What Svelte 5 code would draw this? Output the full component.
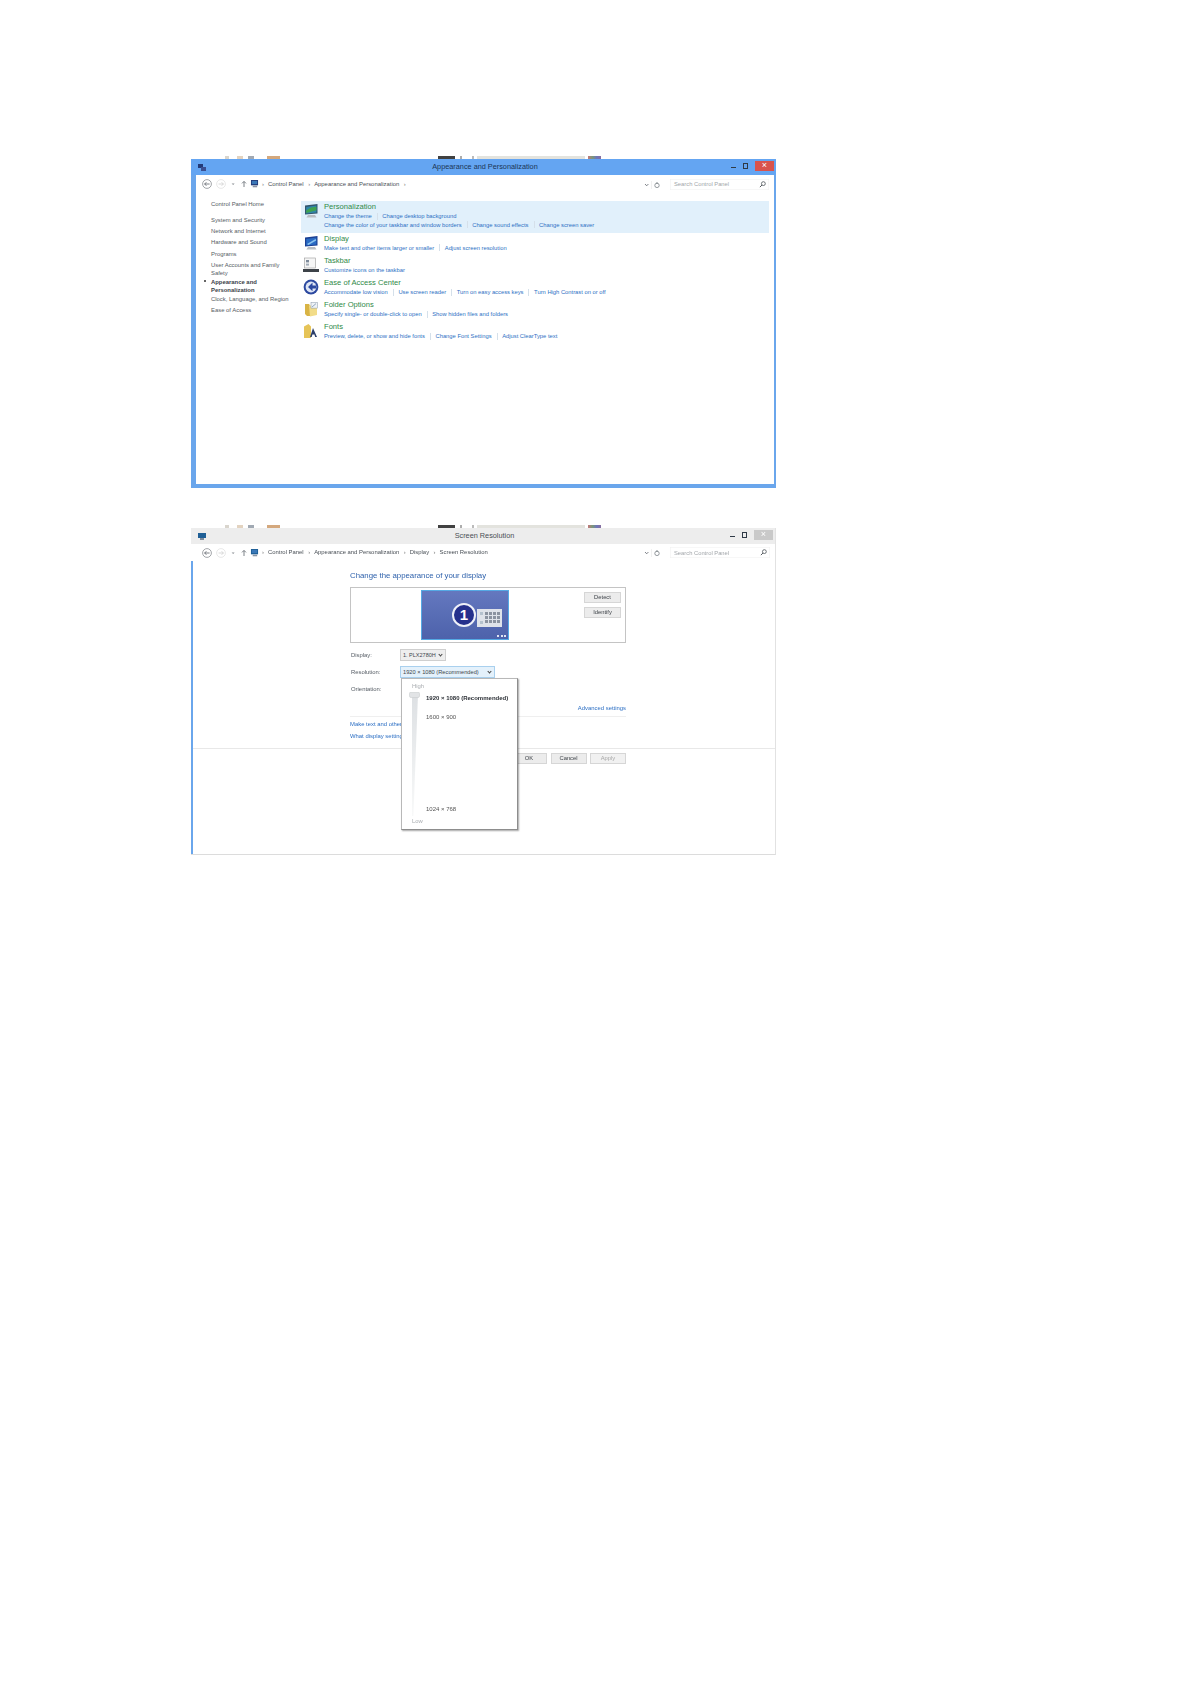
<script>
	const sidebar = [
		{ text: 'System and Security' },
		{ text: 'Network and Internet' },
		{ text: 'Hardware and Sound' },
		{ text: 'Programs' },
		{ text: 'User Accounts and Family Safety', two: true },
		{ text: 'Appearance and Personalization', two: true, current: true },
		{ text: 'Clock, Language, and Region' },
		{ text: 'Ease of Access' }
	];

	const tasks = [
		{
			icon: 'monitor',
			title: 'Personalization',
			active: true,
			rows: [
				['Change the theme', 'Change desktop background'],
				['Change the color of your taskbar and window borders', 'Change sound effects', 'Change screen saver']
			]
		},
		{ icon: 'display', title: 'Display', rows: [['Make text and other items larger or smaller', 'Adjust screen resolution']] },
		{ icon: 'taskbar', title: 'Taskbar', rows: [['Customize icons on the taskbar']] },
		{
			icon: 'ease',
			title: 'Ease of Access Center',
			rows: [['Accommodate low vision', 'Use screen reader', 'Turn on easy access keys', 'Turn High Contrast on or off']]
		},
		{ icon: 'folder', title: 'Folder Options', rows: [['Specify single- or double-click to open', 'Show hidden files and folders']] },
		{ icon: 'fonts', title: 'Fonts', rows: [['Preview, delete, or show and hide fonts', 'Change Font Settings', 'Adjust ClearType text']] }
	];

	// scraps of the desktop that show above each window
	const scraps = [
		{ w: 4, gap: 34, c: '#cfcac0' },
		{ w: 6, gap: 8, c: '#dcc8b0' },
		{ w: 6, gap: 5, c: '#8a94a0' },
		{ w: 13, gap: 13, c: '#c9925c' },
		{ w: 17, gap: 158, c: '#111111' },
		{ w: 2, gap: 5, c: '#999999' },
		{ w: 2, gap: 10, c: '#aaaaaa' },
		{ w: 108, gap: 3, c: '#dcdcd6' },
		{ w: 13, gap: 3, c: 'linear-gradient(90deg, #b5555a, #5a7f58, #4a55a8, #6a4a88)' }
	];

	const keys = Array.from({ length: 12 });
</script>

{#snippet strip()}
	<div class="strip">
		{#each scraps as s}
			<i style="width:{s.w}px;margin-left:{s.gap}px;background:{s.c}"></i>
		{/each}
	</div>
{/snippet}

{#snippet smallIcon(kind)}
	<svg class="task-icon" viewBox="0 0 16 16">
		{#if kind === 'monitor'}
			<path d="M2 2.5 14.5 1v9.5L2 11.5z" fill="#33566e" />
			<path d="M3.2 4 13.4 2.6v6.8L3.2 10.4z" fill="#2f86a9" />
			<path d="M3.2 7.4 8 4.4l5.4-.6v3.4L3.2 10z" fill="#3fa24f" />
			<path d="M5 12h7l1.5 2.6H3.4z" fill="#b9bdc2" />
		{:else if kind === 'display'}
			<path d="M2 2.5 14.5 1v9.5L2 11.5z" fill="#1b3f92" />
			<path d="M3.2 4 13.4 2.6v6.8L3.2 10.4z" fill="#2a6bc4" />
			<path d="M4 9 12.6 4l.6 1.4L5.4 10z" fill="#8cc4ee" />
			<path d="M5 12h7l1.5 2.6H3.4z" fill="#b9bdc2" />
		{:else if kind === 'taskbar'}
			<rect x="1.5" y="1" width="11" height="10" fill="#f6f6f6" stroke="#9a9a9a" stroke-width=".6" />
			<rect x="3" y="3" width="3" height="2.4" fill="#7d8a9a" />
			<rect x="3" y="6.6" width="3" height="2" fill="#a3adb8" />
			<rect x="0" y="12" width="16" height="3" fill="#3d4248" />
		{:else if kind === 'ease'}
			<circle cx="8" cy="8" r="7.4" fill="#2c49a0" />
			<circle cx="8" cy="8" r="5.4" fill="#dfe6f5" />
			<path d="M9.5 3.6 5 8l4.5 4.2V9.6H13V6.6H9.5z" fill="#2c49a0" />
		{:else if kind === 'folder'}
			<path d="M2 3h4l1 1.5V15H4L2 13z" fill="#d9b445" />
			<path d="M6 4.5h8V14l-7 1.5z" fill="#f2dc88" />
			<rect x="8" y="1.5" width="6.5" height="5.6" fill="#eef2f6" stroke="#8a97a8" stroke-width=".5" />
			<path d="M9 6 13 2.6" stroke="#6a86a8" stroke-width=".7" />
		{:else}
			<path d="M1 15V3.5L5.5 1 8 3.5V15z" fill="#e6c458" />
			<path d="M7 14 10 5l4 9h-1.8l-.8-2.4H9.4L8.7 14z" fill="#2c3f6a" />
		{/if}
	</svg>
{/snippet}

{#snippet addressBar(crumbs, iconColor)}
	<div class="address">
		<div class="nav">
			<svg class="nav-svg" viewBox="0 0 48 10">
				<circle cx="6" cy="5" r="4.4" fill="#fff" stroke="#8b8f94" stroke-width=".8" />
				<path d="M8.6 5H3.6M5.4 3.2 3.6 5l1.8 1.8" fill="none" stroke="#5a6068" stroke-width=".8" />
				<circle cx="20" cy="5" r="4.4" fill="#fff" stroke="#e2e2e2" stroke-width=".8" />
				<path d="M17.6 5h4.8M20.6 3.2 22.4 5l-1.8 1.8" fill="none" stroke="#cfcfcf" stroke-width=".8" />
				<path d="M30.6 4.4h3l-1.5 1.6z" fill="#8b8f94" />
				<path d="M43 8V2.6M41 4.4l2-2 2 2" fill="none" stroke="#6c7278" stroke-width=".9" />
			</svg>
		</div>
		<div class="addr-box">
			<svg class="addr-icon" viewBox="0 0 10 9">
				<rect x="1" y="0" width="8" height="6" fill={iconColor} />
				<rect x="2" y="1" width="6" height="3.6" fill="#3a78b8" />
				<rect x="3" y="6.4" width="5" height="1.8" fill="#8b95a5" />
			</svg>
			{#each crumbs as c}
				<span class="sep">›</span>
				<span class="crumb">{c}</span>
			{/each}
			<span class="addr-end">›</span>
			<svg class="addr-tools" viewBox="0 0 18 8">
				<path d="M1 3 2.7 4.8 4.4 3" fill="none" stroke="#5f656c" stroke-width=".8" />
				<path d="M7.5 0v8" stroke="#e0e0e0" stroke-width=".5" />
				<circle cx="13" cy="4.4" r="2.2" fill="none" stroke="#6c7278" stroke-width=".7" />
				<path d="M13 1v2" stroke="#6c7278" stroke-width=".7" />
			</svg>
		</div>
		<div class="search">
			<span>Search Control Panel</span>
			<svg class="lens" viewBox="0 0 8 8">
				<circle cx="5" cy="3" r="2.2" fill="none" stroke="#4d5358" stroke-width=".9" />
				<path d="M3.4 4.6 1 7" stroke="#4d5358" stroke-width="1.1" />
			</svg>
		</div>
	</div>
{/snippet}

<div class="page">
	{@render strip()}
	<section class="win win-blue">
		<header class="title-bar blue">
			<svg class="app-icon" viewBox="0 0 8 7">
				<rect x="0" y="0" width="5" height="4" fill="#233a78" />
				<rect x="3" y="3" width="5" height="4" fill="#3a4f92" />
			</svg>
			<span class="title">Appearance and Personalization</span>
			<div class="controls">
				<span class="min"></span>
				<span class="max"></span>
				<span class="close">×</span>
			</div>
		</header>
		{@render addressBar(['Control Panel', 'Appearance and Personalization'], '#233a78')}
		<div class="panel">
			<nav class="sidebar">
				<div class="side-home">Control Panel Home</div>
				{#each sidebar as item}
					<div class="side-item" class:two={item.two} class:current={item.current}>{item.text}</div>
				{/each}
			</nav>
			<div class="tasks">
				{#each tasks as task}
					<div class="task" class:active={task.active}>
						{@render smallIcon(task.icon)}
						<div class="task-text">
							<div class="task-title">{task.title}</div>
							{#each task.rows as row}
								<div class="links">
									{#each row as link, i}
										{#if i > 0}<span class="bar"></span>{/if}
										<span>{link}</span>
									{/each}
								</div>
							{/each}
						</div>
					</div>
				{/each}
			</div>
		</div>
	</section>

	<div class="between"></div>

	{@render strip()}
	<section class="win win-grey">
		<header class="title-bar grey">
			<svg class="app-icon" viewBox="0 0 8 7">
				<rect x="0" y="0" width="8" height="5" fill="#1f5f96" />
				<rect x="2" y="5" width="4" height="2" fill="#7d8a9a" />
			</svg>
			<span class="title">Screen Resolution</span>
			<div class="controls">
				<span class="min"></span>
				<span class="max"></span>
				<span class="close off">×</span>
			</div>
		</header>
		{@render addressBar(['Control Panel', 'Appearance and Personalization', 'Display', 'Screen Resolution'], '#1f5f96')}
		<div class="res-body">
			<div class="res-main">
				<h1>Change the appearance of your display</h1>
				<div class="preview">
					<div class="screen">
						<span class="badge">1</span>
						<div class="pad">
							<div class="pad-dots"><i></i><i></i></div>
							<div class="pad-keys">
								{#each keys as _}<i></i>{/each}
							</div>
						</div>
						<div class="more"><i></i><i></i><i></i></div>
					</div>
					<div class="side-btns">
						<button>Detect</button>
						<button>Identify</button>
					</div>
				</div>

				<div class="field">
					<span class="label">Display:</span>
					<div class="select narrow">1. PLX2780H <em></em></div>
				</div>
				<div class="field has-drop">
					<span class="label">Resolution:</span>
					<div class="select wide">1920 × 1080 (Recommended) <em></em></div>
					<div class="dropdown">
						<div class="drop-end">High</div>
						<div class="drop-mid">
							<div class="slider">
								<svg viewBox="0 0 12 112" preserveAspectRatio="none">
									<defs>
										<linearGradient id="wedge" x1="0" y1="0" x2="0" y2="1">
											<stop offset="0" stop-color="#dde0e3" />
											<stop offset="1" stop-color="#f8f9f9" />
										</linearGradient>
									</defs>
									<path d="M3 2h6l-4.6 110H3z" fill="url(#wedge)" />
									<rect x="0.5" y="0" width="10" height="5" rx="1.5" fill="#e2e4e6" stroke="#c4c7ca" stroke-width=".5" />
								</svg>
							</div>
							<div class="opts">
								<div class="opt top">1920 × 1080 (Recommended)</div>
								<div class="opt mid">1600 × 900</div>
								<div class="opt low">1024 × 768</div>
							</div>
						</div>
						<div class="drop-end">Low</div>
					</div>
				</div>
				<div class="field">
					<span class="label">Orientation:</span>
				</div>

				<div class="advanced"><span>Advanced settings</span></div>
				<div class="res-links">
					<div>Make text and other items larger or smaller</div>
					<div>What display settings should I choose?</div>
				</div>
			</div>
			<footer class="res-foot">
				<button>OK</button>
				<button>Cancel</button>
				<button disabled>Apply</button>
			</footer>
		</div>
	</section>
</div>

<style>
	:global(body) {
		margin: 0;
		background: #fff;
	}

	.page {
		width: 1191px;
		height: 1684px;
		box-sizing: border-box;
		padding: 156px 0 0 191px;
		font-family: "Liberation Sans", Arial, sans-serif;
		font-size: 5.9px;
		color: #555c64;
		filter: blur(0.4px);
		overflow: hidden;
	}

	.strip {
		display: flex;
		height: 3px;
		width: 585px;
	}

	.strip i {
		display: block;
		height: 3px;
		opacity: 0.8;
	}

	.between {
		height: 37px;
	}

	.win {
		width: 585px;
		box-sizing: border-box;
		position: relative;
	}

	.win-blue {
		height: 329px;
		background: #6aa6ec;
		padding: 0 2px 4px 5px;
		display: flex;
		flex-direction: column;
	}

	.win-grey {
		height: 327px;
		display: flex;
		flex-direction: column;
		background: #fff;
		border-right: 1px solid #e2e2e2;
		border-bottom: 1px solid #dcdcdc;
	}

	.title-bar {
		height: 16px;
		flex: none;
		display: flex;
		align-items: center;
		justify-content: center;
		position: relative;
	}

	.title-bar.blue {
		margin: 0 -2px 0 -5px;
		background: #64a5f2;
	}

	.title-bar.blue .title {
		color: #1b3556;
	}

	.title-bar.grey {
		background: #ededed;
	}

	.title {
		font-size: 7.3px;
		color: #4a4f55;
		line-height: 16px;
		margin-left: 3px;
	}

	.app-icon {
		position: absolute;
		left: 7px;
		top: 5px;
		width: 8px;
		height: 7px;
	}

	.controls {
		position: absolute;
		right: 2px;
		top: 1.5px;
		height: 11px;
		display: flex;
		align-items: flex-start;
		gap: 4px;
		color: #333;
	}

	.min {
		width: 5px;
		height: 1px;
		margin-top: 6px;
		background: #2f3a46;
	}

	.max {
		width: 3px;
		height: 4px;
		margin: 2px 3px 0 3px;
		border: 1px solid #2f3a46;
	}

	.close {
		width: 19px;
		height: 10px;
		background: #d9534c;
		color: #fff;
		font-size: 9px;
		line-height: 9px;
		text-align: center;
	}

	.close.off {
		background: #c9c9c9;
	}

	.address {
		height: 20px;
		flex: none;
		display: flex;
		align-items: center;
		background: #fff;
		padding: 0 5px 2px 0;
		box-sizing: border-box;
	}

	.win-grey .address {
		height: 17px;
		padding-left: 5px;
		padding-bottom: 0;
	}

	.nav {
		width: 54px;
		flex: none;
		padding-left: 5px;
		box-sizing: border-box;
	}

	.nav-svg {
		display: block;
		width: 48px;
		height: 10px;
	}

	.addr-box {
		width: 412px;
		height: 11px;
		flex: none;
		display: flex;
		align-items: center;
		gap: 4px;
		position: relative;
		line-height: 11px;
		color: #4a5057;
		font-size: 5.9px;
	}

	.addr-icon {
		width: 9px;
		height: 8px;
		margin-right: -1px;
	}

	.crumb {
		margin-right: 0.5px;
	}

	.sep,
	.addr-end {
		color: #777;
	}

	.win-grey .addr-end {
		display: none;
	}

	.addr-tools {
		position: absolute;
		right: 0;
		top: 2px;
		width: 18px;
		height: 8px;
	}

	.search {
		margin-left: 8px;
		flex: 1;
		height: 11px;
		padding-left: 4px;
		display: flex;
		align-items: center;
		justify-content: space-between;
		color: #a2a6aa;
		font-size: 5.8px;
		box-shadow: inset 0 0 0 0.5px #efefef;
	}

	.lens {
		width: 7px;
		height: 7px;
		margin-right: 3px;
	}

	.panel {
		flex: 1;
		display: flex;
		background: #fff;
		padding-top: 6px;
	}

	.sidebar {
		width: 105px;
		flex: none;
		padding: 0 0 0 15px;
		box-sizing: border-box;
		line-height: 8px;
	}

	.side-home {
		margin: -1.5px 0 8.5px;
		line-height: 8px;
	}

	.side-item {
		margin-bottom: 3.2px;
		width: 85px;
	}

	.side-item.two {
		width: 75px;
		margin-bottom: 1.2px;
	}

	.side-item.current {
		font-weight: 700;
		color: #3a4048;
		position: relative;
	}

	.side-item.current::before {
		content: '';
		position: absolute;
		left: -7px;
		top: 2.5px;
		width: 2px;
		height: 2px;
		border-radius: 50%;
		background: #333;
	}

	.tasks {
		flex: 1;
		padding-right: 5px;
	}

	.task {
		display: flex;
		height: 22.2px;
		box-sizing: border-box;
		padding-left: 2px;
	}

	.task.active {
		height: 31.5px;
		background: #e1f0fb;
	}

	.task-icon {
		width: 16px;
		height: 16px;
		flex: none;
		margin: 2px 5px 0 0;
	}

	.task-title {
		font-size: 7.6px;
		line-height: 11px;
		color: #2f8a48;
	}

	.links {
		display: flex;
		align-items: center;
		gap: 5px;
		font-size: 5.8px;
		line-height: 8.5px;
		color: #2c6fc4;
		white-space: nowrap;
	}

	.bar {
		width: 0.6px;
		height: 7px;
		background: #d5e0ea;
	}

	.res-body {
		flex: 1;
		display: flex;
		flex-direction: column;
		border-left: 2px solid #6aa6ec;
	}

	.res-main {
		padding-left: 157px;
		width: 276px;
		flex: none;
		box-sizing: content-box;
	}

	h1 {
		margin: 9px 0 5px;
		font-size: 7.8px;
		line-height: 12px;
		font-weight: 400;
		color: #2f62ac;
		white-space: nowrap;
	}

	.preview {
		height: 56px;
		box-sizing: border-box;
		border: 1px solid #c4c4c4;
		display: flex;
		padding: 2px 4px 0 70px;
		justify-content: space-between;
	}

	.screen {
		width: 88px;
		height: 50px;
		box-sizing: border-box;
		border: 1.5px solid #55a9e4;
		background: linear-gradient(#6478bf, #4d62ab);
		position: relative;
		display: flex;
		align-items: center;
		padding-left: 30px;
		gap: 1px;
	}

	.badge {
		width: 24px;
		height: 24px;
		box-sizing: border-box;
		border-radius: 50%;
		border: 2px solid #eef0f8;
		background: #25308c;
		color: #fff;
		font-size: 15px;
		font-weight: 700;
		line-height: 19px;
		text-align: center;
		flex: none;
	}

	.pad {
		width: 25px;
		height: 18px;
		margin-top: 5px;
		background: #dfe3ea;
		display: flex;
		align-items: center;
		gap: 2px;
		padding: 0 1px 0 3px;
		box-sizing: border-box;
	}

	.pad-dots {
		display: flex;
		flex-direction: column;
		gap: 6px;
	}

	.pad-dots i {
		display: block;
		width: 3px;
		height: 3px;
		background: #b5c2ce;
	}

	.pad-keys {
		display: grid;
		grid-template-columns: repeat(4, 3px);
		grid-auto-rows: 3px;
		gap: 1px;
	}

	.pad-keys i {
		background: #8b93a0;
	}

	.more {
		position: absolute;
		right: 2px;
		bottom: 2px;
		display: flex;
		gap: 1.5px;
	}

	.more i {
		display: block;
		width: 2px;
		height: 2px;
		background: #dfe3f0;
	}

	button {
		display: block;
		font: inherit;
		font-size: 5.8px;
		line-height: 9px;
		height: 11px;
		width: 37px;
		padding: 0;
		border: 0.5px solid #d6d6d6;
		background: #ececec;
		color: #3d4248;
	}

	button:disabled {
		color: #a8a8a8;
		background: #f1f1f1;
	}

	.side-btns {
		padding-top: 2px;
		display: flex;
		flex-direction: column;
		gap: 4px;
	}

	.field {
		height: 17px;
		display: flex;
		align-items: center;
		padding-left: 1px;
		position: relative;
	}

	.preview + .field {
		margin-top: 3.5px;
	}

	.label {
		width: 50px;
		flex: none;
	}

	.select {
		height: 10px;
		line-height: 10px;
		padding-left: 2px;
		box-sizing: border-box;
		position: relative;
		color: #40464c;
		font-size: 5.7px;
		white-space: nowrap;
	}

	.select em {
		position: absolute;
		right: 3px;
		top: 3px;
		width: 2px;
		height: 2px;
		border-right: 0.7px solid #444;
		border-bottom: 0.7px solid #444;
		transform: rotate(45deg);
	}

	.select.narrow {
		width: 44px;
		font-size: 5.5px;
		background: #eeeeee;
		outline: 0.5px solid #cfcfcf;
	}

	.select.wide {
		width: 93px;
		background: #e4f1fb;
		outline: 0.5px solid #a9d0ee;
	}

	.dropdown {
		position: absolute;
		left: 51px;
		top: 14.5px;
		width: 117px;
		height: 152px;
		box-sizing: border-box;
		background: #fff;
		border: 0.5px solid #b8b8b8;
		border-right: 1px solid #8d8d8d;
		border-bottom: 1px solid #8d8d8d;
		box-shadow: 1px 1px 1.5px rgba(0, 0, 0, 0.35);
		padding: 3px 0 4px 10px;
		z-index: 2;
		display: flex;
		flex-direction: column;
	}

	.drop-end {
		color: #a9adb1;
		line-height: 8px;
	}

	.drop-mid {
		flex: 1;
		display: flex;
		margin-top: 2px;
	}

	.slider {
		width: 16px;
		margin-left: -3px;
		flex: none;
	}

	.slider svg {
		display: block;
		width: 12px;
		height: 124px;
	}

	.opts {
		padding-left: 1px;
	}

	.opt {
		font-size: 6px;
		line-height: 8px;
		white-space: nowrap;
		color: #555;
	}

	.opt.top {
		font-weight: 700;
		color: #2c3036;
		margin-top: 2px;
	}

	.opt.mid {
		margin-top: 11px;
	}

	.opt.low {
		margin-top: 84px;
	}

	.advanced {
		height: 10px;
		margin-top: 5.5px;
		text-align: right;
		line-height: 10px;
		color: #2c6fc4;
		padding-bottom: 3px;
		border-bottom: 0.5px solid #efefef;
	}

	.res-links {
		color: #2c6fc4;
		margin-top: 2.5px;
		line-height: 9px;
		white-space: nowrap;
	}

	.res-links div {
		margin-bottom: 3px;
	}

	.res-foot {
		flex: none;
		margin-top: 4px;
		border-top: 0.5px solid #e8e8e8;
		padding: 4px 149px 0 0;
		display: flex;
		justify-content: flex-end;
		gap: 3.5px;
	}

	.res-foot button {
		width: 36px;
	}
</style>
